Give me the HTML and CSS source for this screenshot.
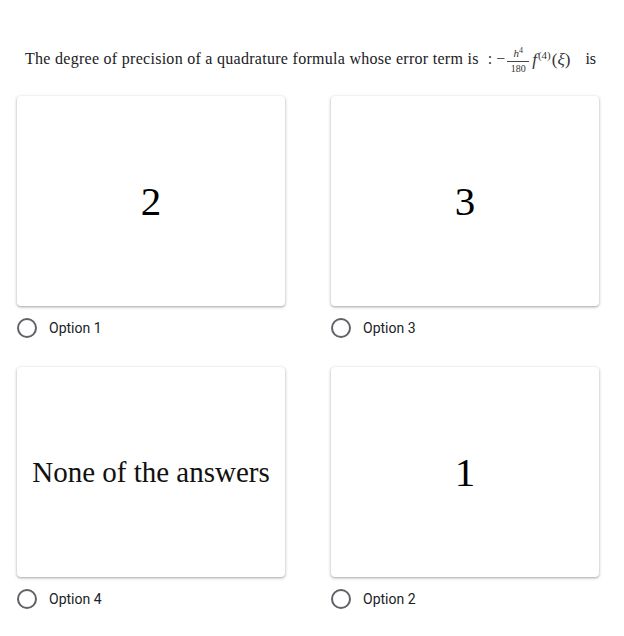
FILE: index.html
```html
<!DOCTYPE html>
<html>
<head>
<meta charset="utf-8">
<link rel="stylesheet" href="styles.css">
</head>
<body>
<div class="page">
  <div class="question">
    <span class="lead">The degree of precision of a quadrature formula whose error term is</span>
    <span class="math">
      <span class="colon">:</span>
      <span class="minus">−</span>
      <span class="frac"><span class="num"><i>h</i><sup>4</sup></span><span class="den">180</span></span>
      <span class="fn"><i>f</i><sup class="order">(4)</sup>(<i>ξ</i>)</span>
    </span>
    <span class="tail">is</span>
  </div>
  <div class="grid">
    <div class="choice">
      <div class="card"><span class="big">2</span></div>
      <label class="opt"><span class="radio"></span><span class="lbl">Option 1</span></label>
    </div>
    <div class="choice">
      <div class="card"><span class="big">3</span></div>
      <label class="opt"><span class="radio"></span><span class="lbl">Option 3</span></label>
    </div>
    <div class="choice">
      <div class="card"><span class="words">None of the answers</span></div>
      <label class="opt"><span class="radio"></span><span class="lbl">Option 4</span></label>
    </div>
    <div class="choice">
      <div class="card"><span class="big">1</span></div>
      <label class="opt"><span class="radio"></span><span class="lbl">Option 2</span></label>
    </div>
  </div>
</div>
</body>
</html>
```
FILE: styles.css
```css
* { box-sizing: border-box; }
html, body { margin: 0; padding: 0; background: #fff; }
.page { padding: 38px 17px 0 17px; }
.question {
  font-family: "Liberation Serif", "Times New Roman", serif;
  font-size: 16px;
  color: #202124;
  padding-left: 8px;
  display: flex;
  align-items: center;
  white-space: nowrap;
  height: 42px;
}
.lead { letter-spacing: 0.28px; }
.math { display: inline-flex; align-items: center; margin-left: 9px; color: #333; }
.colon { margin-right: 4px; }
.minus { margin-right: 2px; }
.frac { display: inline-flex; flex-direction: column; align-items: center; font-size: 11px; line-height: 11px; margin-right: 3px; width: 22px; }
.num { border-bottom: 1px solid #444; padding: 0 3px 2px; width: 100%; text-align: center; }
.num sup { font-size: 8px; vertical-align: 4px; }
.den { padding-top: 1px; font-size: 10px; }
.fn { font-size: 17px; }
.fn .order { font-size: 11px; vertical-align: 6px; margin-left: 1px; margin-right: 1px; }
.tail { margin-left: 15px; }
.grid {
  display: grid;
  grid-template-columns: 268px 268px;
  column-gap: 46px;
  row-gap: 29px;
  margin-top: 16px;
}
.card {
  height: 210px;
  border-radius: 4px;
  background: #fff;
  box-shadow: 0 1px 2px rgba(60,64,67,.3), 0 1px 3px 1px rgba(60,64,67,.15);
  display: flex;
  align-items: center;
  justify-content: center;
  font-family: "Liberation Serif", "Times New Roman", serif;
  color: #000;
}
.big { font-size: 41px; }
.words { font-size: 29px; color: #111; }
.opt {
  display: flex;
  align-items: center;
  margin-top: 12px;
  height: 20px;
}
.radio {
  width: 20px; height: 20px;
  border: 2px solid #5f6368;
  border-radius: 50%;
  flex: none;
}
.lbl {
  margin-left: 12px;
  font-family: Roboto, "Noto Sans", sans-serif;
  font-size: 14px;
  color: #202124;
}
```
